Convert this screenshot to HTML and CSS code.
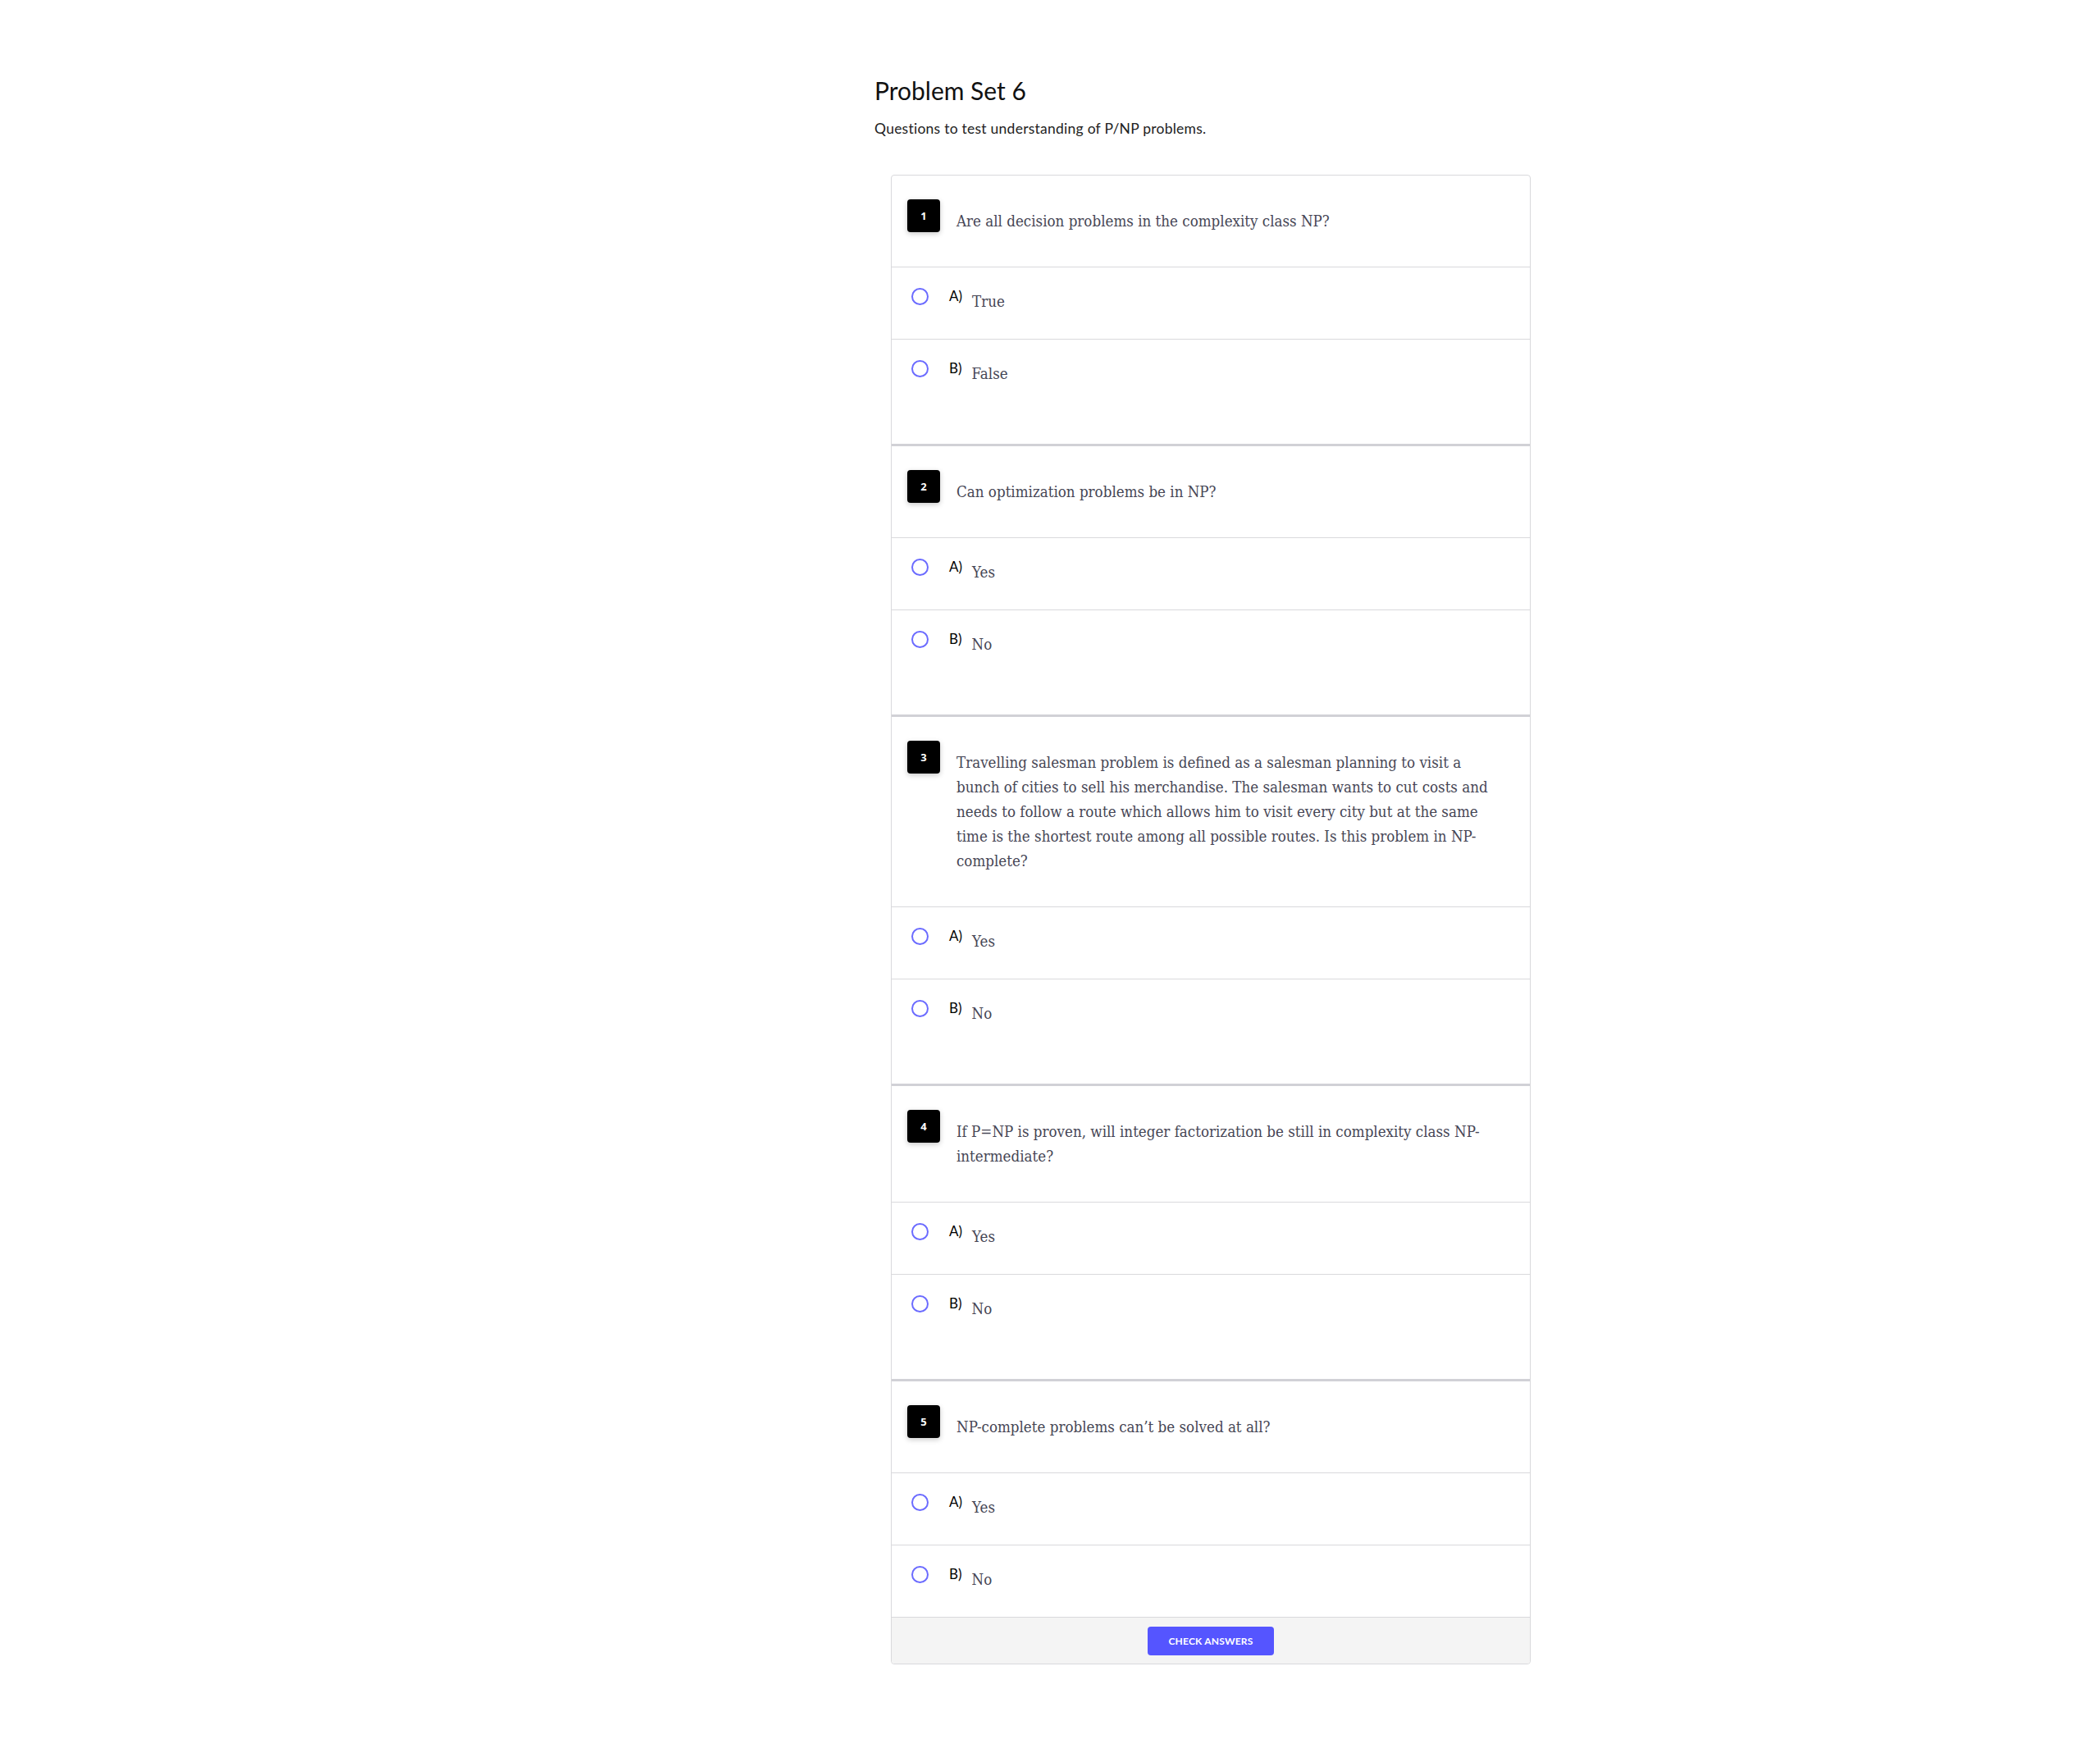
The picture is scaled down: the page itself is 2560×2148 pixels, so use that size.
FILE: index.html
```html
<!DOCTYPE html>
<html lang="en">
<head>
<meta charset="utf-8">
<title>Problem Set 6</title>
<link rel="stylesheet" href="styles.css">
</head>
<body>
<main class="page">
  <h1 class="title">Problem Set 6</h1>
  <p class="subtitle">Questions to test understanding of P/NP problems.</p>
  <section class="quiz">
    <div class="question">
      <div class="q-head"><span class="badge">1</span><p class="q-text">Are all decision problems in the complexity class NP?</p></div>
      <ul class="options">
        <li class="option"><span class="radio"></span><span class="letter">A)</span><span class="answer">True</span></li>
        <li class="option"><span class="radio"></span><span class="letter">B)</span><span class="answer">False</span></li>
      </ul>
    </div>
    <div class="question">
      <div class="q-head"><span class="badge">2</span><p class="q-text">Can optimization problems be in NP?</p></div>
      <ul class="options">
        <li class="option"><span class="radio"></span><span class="letter">A)</span><span class="answer">Yes</span></li>
        <li class="option"><span class="radio"></span><span class="letter">B)</span><span class="answer">No</span></li>
      </ul>
    </div>
    <div class="question">
      <div class="q-head"><span class="badge">3</span><p class="q-text">Travelling salesman problem is defined as a salesman planning to visit a bunch of cities to sell his merchandise. The salesman wants to cut costs and needs to follow a route which allows him to visit every city but at the same time is the shortest route among all possible routes. Is this problem in NP-complete?</p></div>
      <ul class="options">
        <li class="option"><span class="radio"></span><span class="letter">A)</span><span class="answer">Yes</span></li>
        <li class="option"><span class="radio"></span><span class="letter">B)</span><span class="answer">No</span></li>
      </ul>
    </div>
    <div class="question">
      <div class="q-head"><span class="badge">4</span><p class="q-text">If P=NP is proven, will integer factorization be still in complexity class NP-intermediate?</p></div>
      <ul class="options">
        <li class="option"><span class="radio"></span><span class="letter">A)</span><span class="answer">Yes</span></li>
        <li class="option"><span class="radio"></span><span class="letter">B)</span><span class="answer">No</span></li>
      </ul>
    </div>
    <div class="question question--last">
      <div class="q-head"><span class="badge">5</span><p class="q-text">NP-complete problems can’t be solved at all?</p></div>
      <ul class="options">
        <li class="option"><span class="radio"></span><span class="letter">A)</span><span class="answer">Yes</span></li>
        <li class="option"><span class="radio"></span><span class="letter">B)</span><span class="answer">No</span></li>
      </ul>
    </div>
    <div class="quiz-footer"><button class="check-btn" type="button">Check answers</button></div>
  </section>
</main>
</body>
</html>
```

FILE: styles.css
```css
* { box-sizing: border-box; }

body {
  margin: 0;
  background: #ffffff;
  font-family: "Lato", "Noto Sans", sans-serif;
}

.page {
  margin-left: 1066px;
  padding-top: 92px;
  padding-bottom: 100px;
  width: 820px;
}

.title {
  margin: 0;
  font-family: "Lato", sans-serif;
  font-weight: 400;
  font-size: 30px;
  line-height: 36px;
  color: #111111;
}

.subtitle {
  margin: 17px 0 0;
  font-family: "Lato", sans-serif;
  font-size: 17.5px;
  letter-spacing: 0.25px;
  line-height: 24px;
  color: #222222;
}

.quiz {
  margin: 44px 0 0 20px;
  width: 780px;
  border: 1px solid #d9d9dc;
  border-radius: 4px;
  background: #ffffff;
}

.question + .question {
  border-top: 3px solid #d1d1d6;
}

.q-head {
  display: flex;
  align-items: flex-start;
  padding: 29px 30px 40px 19px;
}

.badge {
  flex: none;
  display: flex;
  align-items: center;
  justify-content: center;
  width: 40px;
  height: 40px;
  border-radius: 4px;
  background: #000000;
  color: #ffffff;
  font-family: "Open Sans", sans-serif;
  font-weight: 700;
  font-size: 13px;
  box-shadow: 0 2px 6px rgba(0, 0, 0, 0.22);
}

.q-text {
  flex: 1;
  margin: 12px 0 0 20px;
  font-family: "DejaVu Serif", "Liberation Serif", serif;
  font-stretch: condensed;
  font-size: 18.6px;
  line-height: 30px;
  color: #464655;
}

.options {
  list-style: none;
  margin: 0;
  padding: 0;
}

.option {
  display: flex;
  align-items: flex-start;
  border-top: 1px solid #d9d9dc;
  padding: 27px 24px 30px;
}

.question:not(.question--last) .option:last-child {
  padding-bottom: 70px;
}

.radio {
  flex: none;
  width: 21px;
  height: 21px;
  margin-top: -2px;
  border: 2px solid #6b6bff;
  border-radius: 50%;
}

.letter {
  flex: none;
  margin: -2px 0 0 25px;
  font-family: "Lato", sans-serif;
  font-size: 17px;
  line-height: 20px;
  color: #000000;
}

.answer {
  margin-left: 12px;
  font-family: "DejaVu Serif", "Liberation Serif", serif;
  font-stretch: condensed;
  font-size: 18.6px;
  line-height: 30px;
  color: #464655;
}

.quiz-footer {
  display: flex;
  justify-content: center;
  padding: 11px 0 10px;
  border-top: 1px solid #d9d9dc;
  background: #f4f4f4;
  border-radius: 0 0 4px 4px;
}

.check-btn {
  width: 154px;
  height: 35px;
  border: none;
  border-radius: 4px;
  background: #5555ff;
  color: #ffffff;
  font-family: "Lato", sans-serif;
  font-weight: 700;
  font-size: 12px;
  letter-spacing: 0.2px;
  text-transform: uppercase;
  cursor: pointer;
}
```
